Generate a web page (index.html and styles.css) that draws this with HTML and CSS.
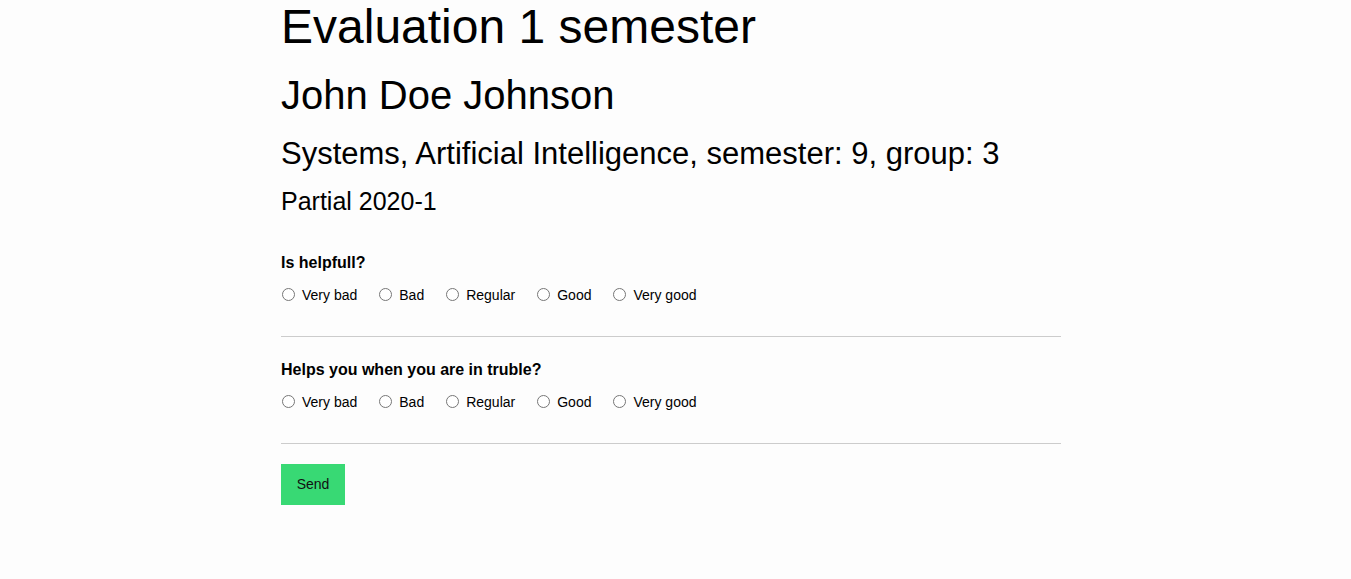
FILE: index.html
```html
<!DOCTYPE html>
<html lang="en">
<head>
<meta charset="utf-8">
<title>Evaluation 1 semester</title>
<link rel="stylesheet" href="styles.css">
</head>
<body>
<main class="page">
  <h1 class="title">Evaluation 1 semester</h1>
  <h2 class="student">John Doe Johnson</h2>
  <h3 class="career">Systems, Artificial Intelligence, semester: 9, group: 3</h3>
  <h4 class="partial">Partial 2020-1</h4>
  <form class="form">
    <div class="question">
      <p class="q-label">Is helpfull?</p>
      <div class="options">
        <label class="option"><input type="radio" name="q1" value="1"><span>Very bad</span></label>
        <label class="option"><input type="radio" name="q1" value="2"><span>Bad</span></label>
        <label class="option"><input type="radio" name="q1" value="3"><span>Regular</span></label>
        <label class="option"><input type="radio" name="q1" value="4"><span>Good</span></label>
        <label class="option"><input type="radio" name="q1" value="5"><span>Very good</span></label>
      </div>
    </div>
    <div class="question">
      <p class="q-label">Helps you when you are in truble?</p>
      <div class="options">
        <label class="option"><input type="radio" name="q2" value="1"><span>Very bad</span></label>
        <label class="option"><input type="radio" name="q2" value="2"><span>Bad</span></label>
        <label class="option"><input type="radio" name="q2" value="3"><span>Regular</span></label>
        <label class="option"><input type="radio" name="q2" value="4"><span>Good</span></label>
        <label class="option"><input type="radio" name="q2" value="5"><span>Very good</span></label>
      </div>
    </div>
    <button type="submit" class="send">Send</button>
  </form>
</main>
</body>
</html>
```
FILE: styles.css
```css
html, body {
  margin: 0;
  padding: 0;
  background: #fdfdfd;
}
body {
  font-family: "Liberation Sans", Arial, sans-serif;
  color: #000;
  padding-right: 9px;
}
.page {
  width: 780px;
  margin: 0 auto;
}
.title {
  font-size: 48px;
  line-height: 54px;
  font-weight: normal;
  margin: 0;
}
.student {
  font-size: 40px;
  line-height: 48px;
  font-weight: normal;
  margin: 17px 0 0;
}
.career {
  font-size: 31px;
  line-height: 36px;
  font-weight: normal;
  margin: 17px 0 0;
}
.partial {
  font-size: 25px;
  line-height: 28px;
  font-weight: normal;
  margin: 15px 0 0;
}
.form {
  margin-top: 39px;
}
.question {
  border-bottom: 1px solid #cccccc;
  padding-bottom: 33px;
  margin-bottom: 24px;
}
.question + .question {
  margin-bottom: 20px;
}
.q-label {
  font-size: 16px;
  line-height: 18px;
  font-weight: bold;
  margin: 0 0 15px;
}
.options {
  display: flex;
  gap: 21px;
  font-size: 14px;
  line-height: 16px;
}
.option {
  display: flex;
  align-items: center;
}
.option input {
  width: 13px;
  height: 13px;
  margin: 0 7px 0 1px;
  position: relative;
  top: -1px;
}
.send {
  display: block;
  width: 64px;
  height: 41px;
  padding: 0 0 2px;
  border: none;
  background: #38d974;
  color: #111;
  font-family: "Liberation Sans", Arial, sans-serif;
  font-size: 14px;
}
```
